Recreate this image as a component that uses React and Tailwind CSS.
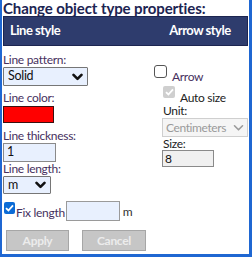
import React from "react";

const Chevron = ({ color = "#111", w = 2.6 }) => (
  <svg width="11" height="8" viewBox="0 0 11 8">
    <path d="M1.5 1.8 L5.5 5.8 L9.5 1.8" fill="none" stroke={color} strokeWidth={w} strokeLinecap="round" strokeLinejoin="round" />
  </svg>
);

export default function App() {
  return (
    <div
      className="w-[252px] h-[257px] bg-white border-l-2 border-r-[3px] border-b-[3px] border-[#1f67d2] flex flex-col overflow-hidden"
      style={{ fontFamily: "Lato, 'Open Sans', sans-serif" }}
    >
      <div className="h-[16px] pl-[1px] text-[15px] leading-[16px] font-bold text-[#1c2452] whitespace-nowrap tracking-[-0.1px]">
        Change object type properties:
      </div>
      <div className="ml-[1px] mr-[1px] h-[30px] bg-[#2e3c6d] border border-[#1c2550] grid grid-cols-[147px_1fr] items-center text-white font-bold text-[13px] tracking-[-0.5px]">
        <div className="pl-[6px]">Line style</div>
        <div className="text-center pl-[2px]">Arrow style</div>
      </div>
      <div className="grid grid-cols-[149px_1fr] text-[12px] text-[#46305e] tracking-[-0.3px]">
        <div className="flex flex-col pl-[1px] pt-[7px]">
          <div className="h-[14px] leading-[14px]">Line pattern:</div>
          <div className="w-[85px] h-[19px] border border-[#767676] bg-[#e8f0fe] flex items-center justify-between pl-[4px] pr-[4px] text-[#111] text-[12.5px] rounded-[1px]">
            <span>Solid</span>
            <Chevron />
          </div>
          <div className="h-[14px] leading-[14px] mt-[5px]">Line color:</div>
          <div className="w-[51px] h-[17px] mt-[1px] bg-[#ff0000] border border-[#3a1010]" />
          <div className="h-[14px] leading-[14px] mt-[6px]">Line thickness:</div>
          <div className="w-[53px] h-[19px] border border-[#8a8a8a] bg-[#e8f0fe] flex items-center pl-[3px] text-[#111] text-[12.5px]">1</div>
          <div className="h-[14px] leading-[14px]">Line length:</div>
          <div className="w-[48px] h-[18px] border border-[#767676] bg-[#e8f0fe] flex items-center justify-between pl-[4px] pr-[4px] text-[#111] text-[12.5px] rounded-[1px]">
            <span>m</span>
            <Chevron />
          </div>
          <div className="flex items-center mt-[7px] h-[20px]">
            <div className="w-[11px] h-[12px] ml-[1px] mb-[6px] bg-[#0b6bd6] rounded-[2px] flex items-center justify-center">
              <svg width="9" height="8" viewBox="0 0 9 8">
                <path d="M1 4.2 L3.4 6.5 L8 1.3" fill="none" stroke="#fff" strokeWidth="1.8" />
              </svg>
            </div>
            <span className="ml-[1px] mt-[4px]">Fix length</span>
            <div className="w-[54px] h-[20px] ml-[1px] border border-[#9a9a9a] bg-[#e8f0fe]" />
            <span className="ml-[3px] mt-[2px] text-[#333]">m</span>
          </div>
          <div className="flex mt-[9px] pl-[3px] gap-[13px]">
            <div className="w-[63px] h-[21px] bg-[#c6c6c6] border border-[#a6a6a6] flex items-center justify-center text-[#ececec] font-bold text-[12px]">
              Apply
            </div>
            <div className="w-[64px] h-[21px] bg-[#c6c6c6] border border-[#a6a6a6] flex items-center justify-center text-[#ececec] font-bold text-[12px]">
              Cancel
            </div>
          </div>
        </div>
        <div className="flex flex-col pt-[19px] pl-[3px]">
          <div className="flex items-start h-[20px]">
            <div className="w-[13px] h-[13px] border border-[#555] rounded-[3px] bg-white" />
            <span className="ml-[5px] mt-[5px] leading-[14px]">Arrow</span>
          </div>
          <div className="flex items-start h-[20px] ml-[9px]">
            <div className="w-[12px] h-[12px] mt-[1px] bg-[#cfcfcf] rounded-[2px] flex items-center justify-center">
              <svg width="9" height="8" viewBox="0 0 9 8">
                <path d="M1 4.2 L3.4 6.5 L8 1.3" fill="none" stroke="#fff" strokeWidth="1.8" />
              </svg>
            </div>
            <span className="ml-[5px] mt-[6px] leading-[14px] text-[#222]">Auto size</span>
          </div>
          <div className="h-[14px] leading-[14px] ml-[9px] mt-[-1px] text-[#222]">Unit:</div>
          <div className="w-[86px] h-[19px] ml-[8px] border border-[#cfcfcf] bg-[#f5f5f5] flex items-center justify-between pl-[3px] pr-[3px] text-[#9a9a9a] text-[12px] tracking-[-0.4px]">
            <span>Centimeters</span>
            <Chevron color="#9a9a9a" w={1.6} />
          </div>
          <div className="h-[13px] leading-[14px] ml-[9px] text-[#222]">Size:</div>
          <div className="w-[52px] h-[17px] ml-[8px] border border-[#8a8a8a] bg-[#f0f0f0] flex items-center pl-[2px] text-[#111] text-[12px]">8</div>
        </div>
      </div>
    </div>
  );
}
